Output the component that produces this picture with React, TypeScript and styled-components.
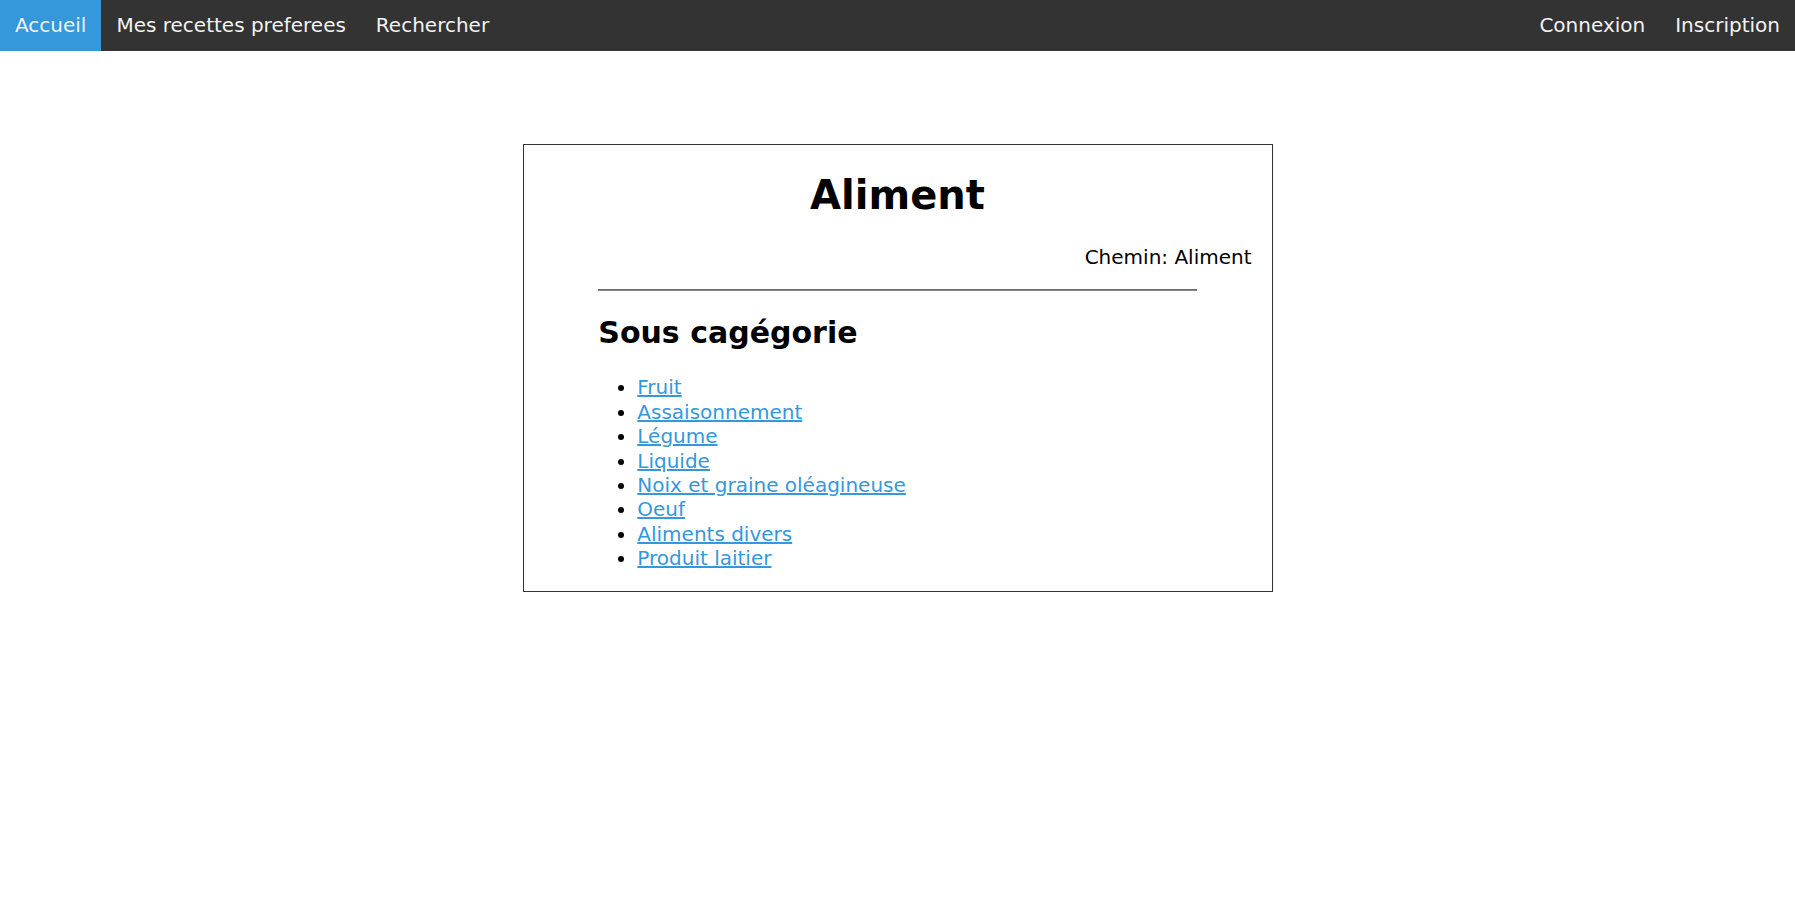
import React from 'react';
import styled, { createGlobalStyle } from 'styled-components';

const GlobalStyle = createGlobalStyle`
  body {
    margin: 0;
    font-family: "DejaVu Sans", Verdana, sans-serif;
    font-size: 20px;
    background: #fff;
    color: #000;
  }
`;

const TopNav = styled.nav`
  display: flex;
  background-color: #333;
`;

const NavLink = styled.a<{ $active?: boolean }>`
  display: block;
  padding: 13px 15px 14px;
  line-height: 24px;
  color: #f2f2f2;
  text-decoration: none;
  background-color: ${(p) => (p.$active ? '#3498db' : 'transparent')};
  cursor: pointer;
`;

const NavRight = styled.div`
  display: flex;
  margin-left: auto;
`;

const Card = styled.div`
  width: 750px;
  box-sizing: border-box;
  margin: 93px auto 0;
  border: 1px solid #333;
`;

const Title = styled.h1`
  font-size: 2em;
  font-weight: bold;
  text-align: center;
  margin: 0.67em 0;
`;

const Path = styled.p`
  text-align: right;
  margin: 1em 0;
  padding-right: 20px;
`;

const Section = styled.div`
  width: 80%;
  margin: 0 auto;
`;

const Divider = styled.hr`
  margin: 10px 0;
  height: 0;
  border: none;
  border-top: 1px solid #6a6a6a;
  border-bottom: 1px solid #8a8a8a;
`;

const SubTitle = styled.h2`
  font-size: 1.5em;
  font-weight: bold;
  margin: 0.83em 0;
`;

const List = styled.ul`
  margin: 1em 0;
  padding-left: 39px;
`;

const Item = styled.li`
  line-height: 1.22;
`;

const ItemLink = styled.a`
  color: #3498db;
  text-decoration: underline;
`;

const categories = [
  'Fruit',
  'Assaisonnement',
  'Légume',
  'Liquide',
  'Noix et graine oléagineuse',
  'Oeuf',
  'Aliments divers',
  'Produit laitier',
];

const App: React.FC = () => {
  return (
    <>
      <GlobalStyle />
      <TopNav>
        <NavLink $active href="#">Accueil</NavLink>
        <NavLink href="#">Mes recettes preferees</NavLink>
        <NavLink href="#">Rechercher</NavLink>
        <NavRight>
          <NavLink href="#">Connexion</NavLink>
          <NavLink href="#">Inscription</NavLink>
        </NavRight>
      </TopNav>
      <Card>
        <Title>Aliment</Title>
        <Path>Chemin: Aliment</Path>
        <Section>
          <Divider />
          <SubTitle>Sous cagégorie</SubTitle>
          <List>
            {categories.map((c) => (
              <Item key={c}>
                <ItemLink href="#">{c}</ItemLink>
              </Item>
            ))}
          </List>
        </Section>
      </Card>
    </>
  );
};

export default App;
